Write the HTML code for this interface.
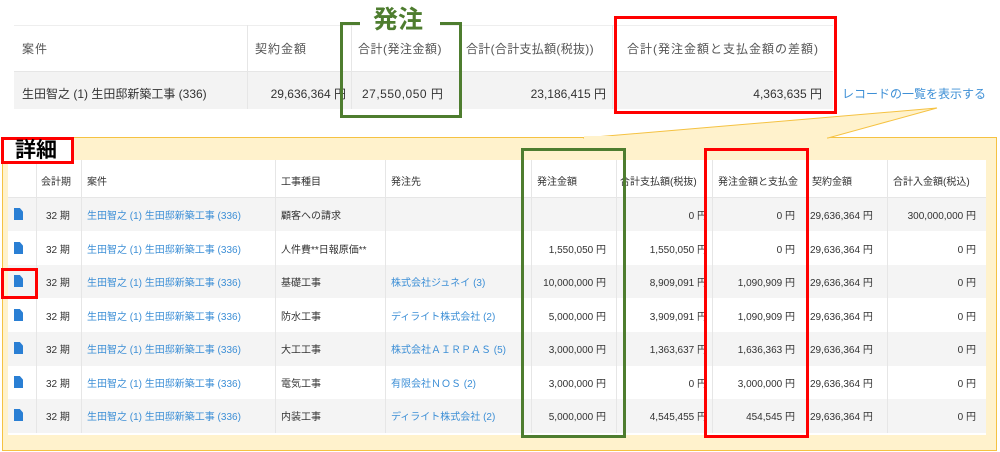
<!DOCTYPE html>
<html><head><meta charset="utf-8"><style>
*{margin:0;padding:0;box-sizing:border-box}
body{width:1000px;height:452px;background:#fff;position:relative;overflow:hidden;font-family:"Liberation Sans","Noto Sans CJK JP",sans-serif;color:#333}
.a{position:absolute}
.t{position:absolute;white-space:nowrap}
.h{letter-spacing:1px}
.c{position:absolute;white-space:nowrap;font-size:10px;color:#333}
.l{color:#3d8fd6}
.r{text-align:right}
.i{position:absolute;width:9px;height:12px;background:#2a7fd4;clip-path:polygon(0 0,65% 0,100% 30%,100% 100%,0 100%)}
</style></head><body>
<div class="a" style="left:14px;top:25px;width:819px;height:46px;background:#fff;border-top:1px solid #eee"></div>
<div class="a" style="left:14px;top:71px;width:819px;height:38px;background:#f3f3f3;border-top:1px solid #e6e6e6"></div>
<div class="a" style="left:247px;top:25px;width:1px;height:84px;background:#e6e6e6"></div>
<div class="a" style="left:351px;top:25px;width:1px;height:84px;background:#e6e6e6"></div>
<div class="a" style="left:461px;top:25px;width:1px;height:84px;background:#e6e6e6"></div>
<div class="a" style="left:612px;top:25px;width:1px;height:84px;background:#e6e6e6"></div>
<div class="t h" style="left:22px;top:40px;font-size:12px;color:#555">案件</div>
<div class="t h" style="left:255px;top:40px;font-size:12px;color:#555">契約金額</div>
<div class="t" style="left:358px;top:40px;font-size:12px;color:#555;letter-spacing:.5px">合計(発注金額)</div>
<div class="t" style="left:466px;top:40px;font-size:12px;color:#555;letter-spacing:.3px">合計(合計支払額(税抜))</div>
<div class="t h" style="left:627px;top:40px;font-size:12px;color:#555">合計(発注金額と支払金額の差額)</div>
<div class="t" style="left:22px;top:85px;font-size:12px">生田智之 (1) 生田邸新築工事 (336)</div>
<div class="t r" style="left:247px;width:99px;top:85px;font-size:12px">29,636,364 円</div>
<div class="t" style="left:362px;top:85px;font-size:12px;letter-spacing:.5px">27,550,050 円</div>
<div class="t r" style="left:462px;width:144px;top:85px;font-size:12px">23,186,415 円</div>
<div class="t r" style="left:612px;width:210px;top:85px;font-size:12px">4,363,635 円</div>
<div class="t l" style="left:842px;top:85px;font-size:12px">レコードの一覧を表示する</div>
<div class="a" style="left:340px;top:22px;width:122px;height:96px;border:3px solid #4e7d2f"></div>
<div class="a" style="left:360px;top:10px;width:80px;height:20px;background:#fff"></div>
<div class="t" style="left:373px;top:5px;font-size:25px;font-weight:bold;color:#4e7d2f;line-height:30px">発注</div>
<div class="a" style="left:614px;top:16px;width:223px;height:98px;border:3px solid #f00"></div>
<svg class="a" style="left:0;top:0" width="1000" height="452">
<rect x="2.5" y="137.5" width="994" height="313" fill="#fff2cc" stroke="#f5c242"/>
<polygon points="583,138 937,108 828,138" fill="#fff2cc" stroke="#f5c242"/>
<rect x="584" y="136" width="243" height="3" fill="#fff2cc"/>
</svg>
<div class="a" style="left:8px;top:160px;width:978px;height:275px;background:#fff"></div>
<div class="a" style="left:8px;top:197px;width:978px;height:34px;background:#f4f4f4"></div>
<div class="a" style="left:8px;top:265px;width:978px;height:33px;background:#f4f4f4"></div>
<div class="a" style="left:8px;top:332px;width:978px;height:34px;background:#f4f4f4"></div>
<div class="a" style="left:8px;top:399px;width:978px;height:34px;background:#f4f4f4"></div>
<div class="a" style="left:8px;top:197px;width:978px;height:1px;background:#e6e6e6"></div>
<div class="a" style="left:36px;top:160px;width:1px;height:273px;background:#e6e6e6"></div>
<div class="a" style="left:81px;top:160px;width:1px;height:273px;background:#e6e6e6"></div>
<div class="a" style="left:275px;top:160px;width:1px;height:273px;background:#e6e6e6"></div>
<div class="a" style="left:385px;top:160px;width:1px;height:273px;background:#e6e6e6"></div>
<div class="a" style="left:531px;top:160px;width:1px;height:273px;background:#e6e6e6"></div>
<div class="a" style="left:616px;top:160px;width:1px;height:273px;background:#e6e6e6"></div>
<div class="a" style="left:712px;top:160px;width:1px;height:273px;background:#e6e6e6"></div>
<div class="a" style="left:887px;top:160px;width:1px;height:273px;background:#e6e6e6"></div>
<div class="c" style="left:41px;top:173px">会計期</div>
<div class="c" style="left:87px;top:173px">案件</div>
<div class="c" style="left:281px;top:173px">工事種目</div>
<div class="c" style="left:391px;top:173px">発注先</div>
<div class="c" style="left:537px;top:173px">発注金額</div>
<div class="c" style="left:620px;top:173px">合計支払額(税抜)</div>
<div class="c" style="left:718px;top:173px">発注金額と支払金</div>
<div class="c" style="left:812px;top:173px">契約金額</div>
<div class="c" style="left:893px;top:173px">合計入金額(税込)</div>

<div class="i" style="left:14px;top:208px"></div>
<div class="i" style="left:14px;top:242px"></div>
<div class="i" style="left:14px;top:275px"></div>
<div class="i" style="left:14px;top:309px"></div>
<div class="i" style="left:14px;top:342px"></div>
<div class="i" style="left:14px;top:376px"></div>
<div class="i" style="left:14px;top:409px"></div>

<div class="c" style="left:46px;top:207px">32 期</div><div class="c l" style="left:87px;top:207px">生田智之 (1) 生田邸新築工事 (336)</div><div class="c" style="left:281px;top:207px">顧客への請求</div>
<div class="c r" style="left:616px;width:91px;top:207px">0 円</div><div class="c r" style="left:712px;width:83px;top:207px">0 円</div><div class="c" style="left:810px;top:207px">29,636,364 円</div><div class="c r" style="left:887px;width:89px;top:207px">300,000,000 円</div>

<div class="c" style="left:46px;top:241px">32 期</div><div class="c l" style="left:87px;top:241px">生田智之 (1) 生田邸新築工事 (336)</div><div class="c" style="left:281px;top:241px">人件費**日報原価**</div>
<div class="c r" style="left:531px;width:75px;top:241px">1,550,050 円</div><div class="c r" style="left:616px;width:91px;top:241px">1,550,050 円</div><div class="c r" style="left:712px;width:83px;top:241px">0 円</div><div class="c" style="left:810px;top:241px">29,636,364 円</div><div class="c r" style="left:887px;width:89px;top:241px">0 円</div>

<div class="c" style="left:46px;top:274px">32 期</div><div class="c l" style="left:87px;top:274px">生田智之 (1) 生田邸新築工事 (336)</div><div class="c" style="left:281px;top:274px">基礎工事</div><div class="c l" style="left:391px;top:274px">株式会社ジュネイ (3)</div>
<div class="c r" style="left:531px;width:75px;top:274px">10,000,000 円</div><div class="c r" style="left:616px;width:91px;top:274px">8,909,091 円</div><div class="c r" style="left:712px;width:83px;top:274px">1,090,909 円</div><div class="c" style="left:810px;top:274px">29,636,364 円</div><div class="c r" style="left:887px;width:89px;top:274px">0 円</div>

<div class="c" style="left:46px;top:308px">32 期</div><div class="c l" style="left:87px;top:308px">生田智之 (1) 生田邸新築工事 (336)</div><div class="c" style="left:281px;top:308px">防水工事</div><div class="c l" style="left:391px;top:308px">ディライト株式会社 (2)</div>
<div class="c r" style="left:531px;width:75px;top:308px">5,000,000 円</div><div class="c r" style="left:616px;width:91px;top:308px">3,909,091 円</div><div class="c r" style="left:712px;width:83px;top:308px">1,090,909 円</div><div class="c" style="left:810px;top:308px">29,636,364 円</div><div class="c r" style="left:887px;width:89px;top:308px">0 円</div>

<div class="c" style="left:46px;top:341px">32 期</div><div class="c l" style="left:87px;top:341px">生田智之 (1) 生田邸新築工事 (336)</div><div class="c" style="left:281px;top:341px">大工工事</div><div class="c l" style="left:391px;top:341px">株式会社ＡＩＲＰＡＳ (5)</div>
<div class="c r" style="left:531px;width:75px;top:341px">3,000,000 円</div><div class="c r" style="left:616px;width:91px;top:341px">1,363,637 円</div><div class="c r" style="left:712px;width:83px;top:341px">1,636,363 円</div><div class="c" style="left:810px;top:341px">29,636,364 円</div><div class="c r" style="left:887px;width:89px;top:341px">0 円</div>

<div class="c" style="left:46px;top:375px">32 期</div><div class="c l" style="left:87px;top:375px">生田智之 (1) 生田邸新築工事 (336)</div><div class="c" style="left:281px;top:375px">電気工事</div><div class="c l" style="left:391px;top:375px">有限会社ＮＯＳ (2)</div>
<div class="c r" style="left:531px;width:75px;top:375px">3,000,000 円</div><div class="c r" style="left:616px;width:91px;top:375px">0 円</div><div class="c r" style="left:712px;width:83px;top:375px">3,000,000 円</div><div class="c" style="left:810px;top:375px">29,636,364 円</div><div class="c r" style="left:887px;width:89px;top:375px">0 円</div>

<div class="c" style="left:46px;top:408px">32 期</div><div class="c l" style="left:87px;top:408px">生田智之 (1) 生田邸新築工事 (336)</div><div class="c" style="left:281px;top:408px">内装工事</div><div class="c l" style="left:391px;top:408px">ディライト株式会社 (2)</div>
<div class="c r" style="left:531px;width:75px;top:408px">5,000,000 円</div><div class="c r" style="left:616px;width:91px;top:408px">4,545,455 円</div><div class="c r" style="left:712px;width:83px;top:408px">454,545 円</div><div class="c" style="left:810px;top:408px">29,636,364 円</div><div class="c r" style="left:887px;width:89px;top:408px">0 円</div>

<div class="a" style="left:521px;top:148px;width:105px;height:290px;border:3px solid #4e7d2f"></div>
<div class="a" style="left:704px;top:148px;width:105px;height:290px;border:3px solid #f00"></div>
<div class="a" style="left:1px;top:268px;width:37px;height:31px;border:3px solid #f00"></div>
<div class="a" style="left:1px;top:137px;width:73px;height:27px;border:3px solid #f00;background:#fff"></div>
<div class="t" style="left:15px;top:138px;font-size:21px;font-weight:bold;color:#000;line-height:25px">詳細</div>
</body></html>
